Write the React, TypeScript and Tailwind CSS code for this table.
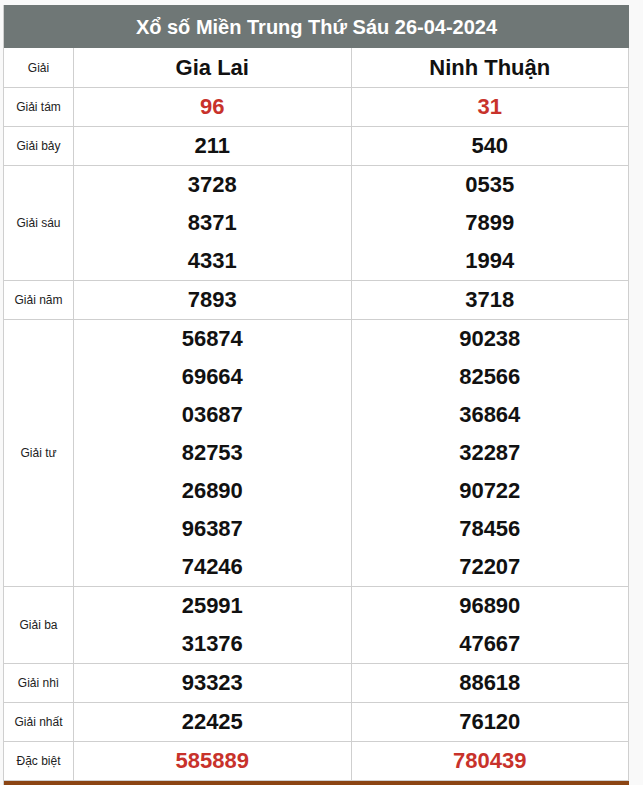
import React from "react";

const rows: { label: string; a: string[]; b: string[]; red?: boolean }[] = [
  { label: "Giải tám", a: ["96"], b: ["31"], red: true },
  { label: "Giải bảy", a: ["211"], b: ["540"] },
  { label: "Giải sáu", a: ["3728", "8371", "4331"], b: ["0535", "7899", "1994"] },
  { label: "Giải năm", a: ["7893"], b: ["3718"] },
  {
    label: "Giải tư",
    a: ["56874", "69664", "03687", "82753", "26890", "96387", "74246"],
    b: ["90238", "82566", "36864", "32287", "90722", "78456", "72207"],
  },
  { label: "Giải ba", a: ["25991", "31376"], b: ["96890", "47667"] },
  { label: "Giải nhì", a: ["93323"], b: ["88618"] },
  { label: "Giải nhất", a: ["22425"], b: ["76120"] },
  { label: "Đặc biệt", a: ["585889"], b: ["780439"], red: true },
];

function Nums({ list, red }: { list: string[]; red?: boolean }) {
  return (
    <div className="flex-1 border-r border-[#cfcfcf] flex flex-col">
      {list.map((n, i) => (
        <div
          key={i}
          className={
            "h-[38px] flex items-center justify-center text-[22px] font-bold leading-none " +
            (red ? "text-[#c8322b]" : "text-[#111]")
          }
        >
          {n}
        </div>
      ))}
    </div>
  );
}

export default function App() {
  return (
    <div
      className="min-h-[785px] bg-[#f9f9f9] pt-[5px] pl-[3px]"
      style={{ fontFamily: '"Liberation Sans", Arial, sans-serif' }}
    >
      <div className="w-[626px] bg-white border-l border-[#cfcfcf]">
        <div className="h-[43px] bg-[#6f7776] flex items-center justify-center text-white text-[20px] font-bold">
          Xổ số Miền Trung Thứ Sáu 26-04-2024
        </div>
        <div className="flex h-[40px] border-b border-[#cfcfcf]">
          <div className="w-[70px] border-r border-[#cfcfcf] flex items-center justify-center text-[12px] text-[#222]">
            Giải
          </div>
          <div className="flex-1 border-r border-[#cfcfcf] flex items-center justify-center text-[22px] font-bold text-[#111]">
            Gia Lai
          </div>
          <div className="flex-1 border-r border-[#cfcfcf] flex items-center justify-center text-[22px] font-bold text-[#111]">
            Ninh Thuận
          </div>
        </div>
        {rows.map((r) => (
          <div key={r.label} className="flex border-b border-[#cfcfcf]">
            <div className="w-[70px] border-r border-[#cfcfcf] flex items-center justify-center text-[12px] text-[#222]">
              {r.label}
            </div>
            <Nums list={r.a} red={r.red} />
            <Nums list={r.b} red={r.red} />
          </div>
        ))}
        <div className="h-[4px] bg-[#8b4513]" />
      </div>
    </div>
  );
}
